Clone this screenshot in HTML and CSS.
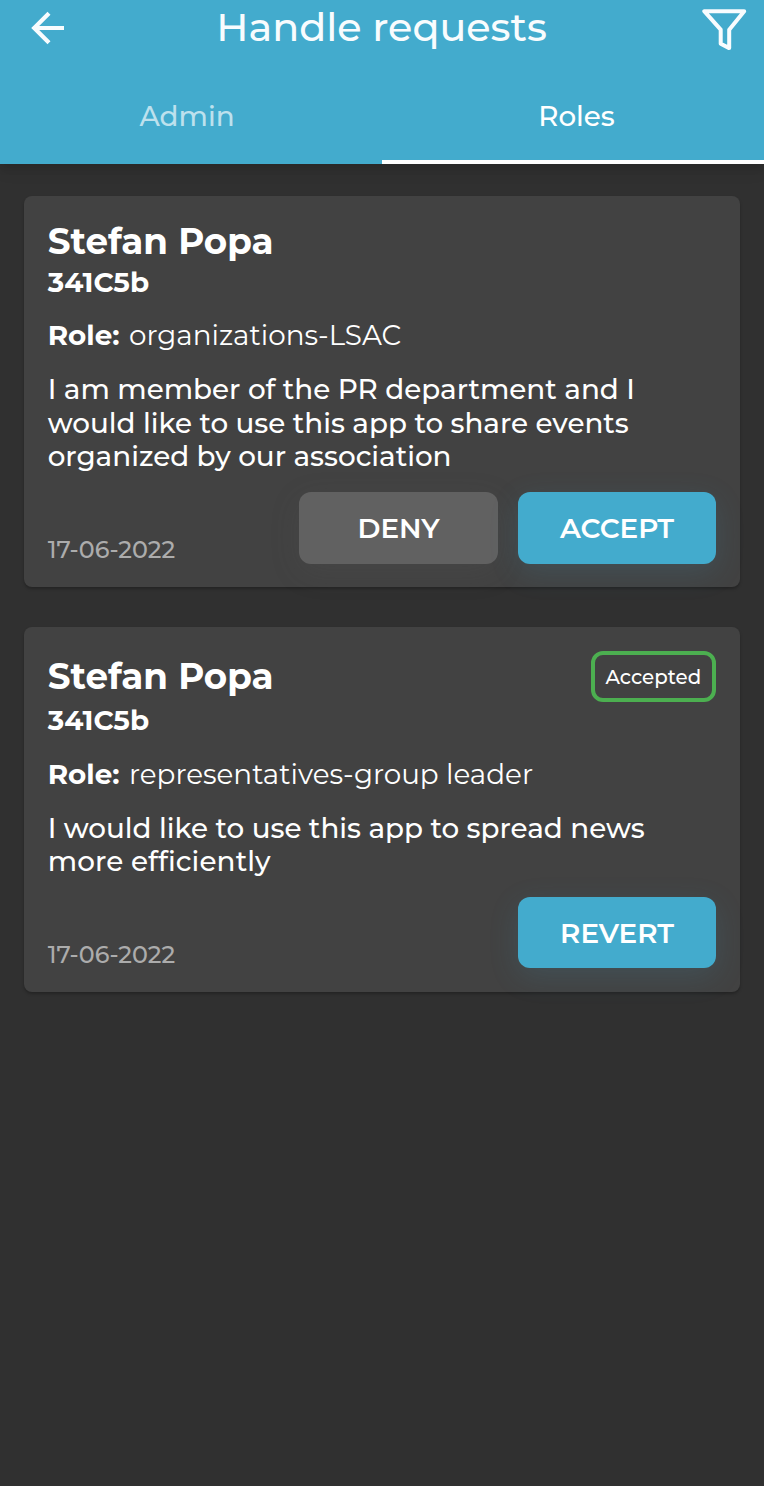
FILE: index.html
```html
<!DOCTYPE html>
<html lang="en">
<head>
<meta charset="utf-8">
<title>Handle requests</title>
<link rel="stylesheet" href="styles.css">
</head>
<body>
<header class="app-bar">
  <div class="toolbar">
    <svg class="back" viewBox="0 0 34 34" width="34" height="34"><path d="M18 2.2 3.2 17 18 31.8M3.5 17H33" fill="none" stroke="#f8fcfe" stroke-width="4.2"/></svg>
    <h1 class="title">Handle requests</h1>
    <svg class="filter" viewBox="0 0 46 44" width="46" height="44"><path d="M3.2 4.2H43.2L28.2 22.7V41.1L19.7 36.8V22.7Z" fill="none" stroke="#f8fcfe" stroke-width="4" stroke-linejoin="round"/></svg>
  </div>
  <nav class="tabs">
    <div class="tab"><span class="tab-label">Admin</span></div>
    <div class="tab active"><span class="tab-label">Roles</span></div>
  </nav>
</header>
<main class="list">
  <article class="card">
    <div class="card-head"><h2 class="name">Stefan Popa</h2></div>
    <div class="group">341C5b</div>
    <div class="role"><b class="label">Role:</b><span class="value">organizations-LSAC</span></div>
    <p class="message">I am member of the PR department and I would like to use this app to share events organized by our association</p>
    <div class="card-foot">
      <time class="date">17-06-2022</time>
      <div class="actions">
        <button class="btn deny">DENY</button>
        <button class="btn primary">ACCEPT</button>
      </div>
    </div>
  </article>
  <article class="card">
    <div class="card-head"><h2 class="name">Stefan Popa</h2><span class="badge">Accepted</span></div>
    <div class="group">341C5b</div>
    <div class="role"><b class="label">Role:</b><span class="value">representatives-group leader</span></div>
    <p class="message">I would like to use this app to spread news <span class="loose">more efficiently</span></p>
    <div class="card-foot">
      <time class="date">17-06-2022</time>
      <div class="actions"><button class="btn primary">REVERT</button></div>
    </div>
  </article>
</main>
</body>
</html>
```
FILE: styles.css
```css
* { box-sizing: border-box; }
body {
  margin: 0;
  min-height: 1486px;
  background: #303030;
  color: #fff;
  font: 500 27.8px/33.5px Montserrat, Inter, sans-serif;
  font-variant-ligatures: none;
}
.app-bar {
  height: 164.3px;
  background: #43abcd;
  box-shadow: 0 4px 8px rgba(0,0,0,.1), 0 8px 14px rgba(0,0,0,.07);
}
.toolbar {
  height: 68px;
  padding: 7px 17px 0 31px;
  display: flex;
  justify-content: space-between;
}
.back { margin-top: 3.5px; }
.filter { margin-top: -.5px; }
.title {
  margin: 0 0 0 -3px;
  font-size: 39.7px;
  line-height: 40px;
  font-weight: 500;
  color: #f8fcfe;
}
.tabs { height: 96.3px; display: grid; grid-template-columns: 1fr 1fr; }
.tab {
  display: flex;
  align-items: center;
  justify-content: center;
  padding: 5px 8px 0 0;
  border-bottom: 4.3px solid transparent;
  color: #bde1ed;
}
.tab.active {
  padding: 5px 0 0 7px;
  border-bottom-color: #fff;
  color: #fff;
}
.list { padding: 31.7px 24px; display: grid; gap: 39.6px; }
.card {
  padding: 24px 23.7px 23.6px 23.7px;
  border-radius: 8px;
  background: #424242;
  box-shadow: 0 2px 3px rgba(0,0,0,.25);
}
.card-head { display: flex; align-items: center; justify-content: space-between; }
.name {
  margin: 0;
  font-size: 35.7px;
  line-height: 43.6px;
  font-weight: 700;
}
.group { line-height: 36.8px; font-weight: 700; }
.role { margin-top: 19.1px; display: flex; }
.label { width: 81.3px; font-weight: 700; }
.value { font-weight: 400; }
.message { margin: 20.5px 0 0; max-width: 620px; }
.loose { letter-spacing: .12px; }
.card-foot {
  margin-top: 18.3px;
  display: flex;
  align-items: flex-end;
  justify-content: space-between;
}
.date { margin-bottom: -.4px; color: #acacac; font-size: 23.8px; line-height: 28px; }
.actions { display: flex; gap: 20px; }
.btn {
  width: 198.5px;
  height: 71.4px;
  border: 0;
  border-radius: 12px;
  padding: 1px 0 0;
  color: #fff;
  font: 600 27.8px/34px Montserrat, Inter, sans-serif;
}
.deny { background: #616161; box-shadow: 0 8px 30px rgba(97,97,97,.15); }
.primary { background: #43abcd; box-shadow: 0 8px 30px rgba(67,171,205,.15); }
.badge {
  width: 125px;
  height: 51px;
  border: 4px solid #4caf50;
  border-radius: 12px;
  display: flex;
  align-items: center;
  justify-content: center;
  font-size: 19.8px;
  padding: 3px 1px 0 0;
}
```
